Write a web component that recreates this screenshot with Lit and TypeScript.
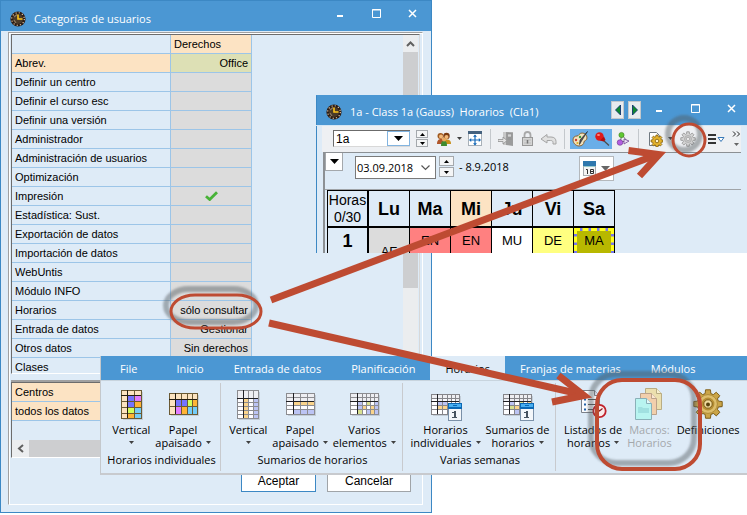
import { LitElement, html, svg, css, nothing } from "lit";
import { customElement, property } from "lit/decorators.js";
import { classMap } from "lit/directives/class-map.js";

const TAN = "#fce3c0", BLUE = "#7474ff", MAG = "#e07cff", ORG = "#ffb436", LIME = "#d2ff5a", SKY = "#74ccf8";
const W = "#fdfdff", HD = "#eeeef2", SO = "#fad48c", SL = "#bcc4f4", SG = "#d8e090";

const gridIcon = (xs: number[], ys: number[], cells: string[][], line: string, dark: string, split: number, extra: unknown = nothing) => {
  const W0 = xs[xs.length - 1], H0 = ys[ys.length - 1];
  return html`<svg width=${W0 + 1} height=${H0 + 1} viewBox="0 0 ${W0 + 1} ${H0 + 1}" overflow="visible" shape-rendering="crispEdges">
    <rect x="2" y="2" width=${W0} height=${H0} fill="#000" opacity=".12"></rect>
    ${cells.map((r, j) => r.map((c, i) => svg`<rect x=${xs[i]} y=${ys[j]} width=${xs[i + 1] - xs[i]} height=${ys[j + 1] - ys[j]} fill=${c}></rect>`))}
    ${xs.map((x) => svg`<rect x=${x} y="0" width="1" height=${H0 + 1} fill=${line}></rect>`)}
    ${ys.map((y) => svg`<rect x="0" y=${y} width=${W0 + 1} height="1" fill=${line}></rect>`)}
    <rect x=${xs[1]} y="0" width="1" height=${H0} fill=${dark}></rect>
    <rect x="0" y=${ys[split]} width=${W0} height="1" fill=${dark}></rect>
    ${extra}
  </svg>`;
};

const dayCard = svg`<g>
  <rect x="17" y="9" width="14" height="18" fill="#7a90a8"></rect>
  <rect x="18" y="15" width="12" height="11" fill="#f4f7fa"></rect>
  <rect x="17" y="9" width="14" height="6" fill="#0b68b4"></rect>
  <rect x="18" y="10" width="12" height="3" fill="#48aef0"></rect>
  <rect x="22" y="11" width="4" height="1" fill="#0b68b4"></rect>
  <path d="M21 18h2v-1h2v6h1v1h-5v-1h2v-4h-2z" fill="#47535f"></path></g>`;

const gearPath = (cx: number, cy: number, r: number, teeth: number, d: number) => {
  let p = "";
  for (let i = 0; i < teeth; i++) {
    const s = (2 * Math.PI) / teeth;
    const a = i * s - Math.PI / 2;
    [[-0.34, r - d], [-0.22, r], [0.22, r], [0.34, r - d]].forEach(([k, q]) => {
      p += `${p ? "L" : "M"}${(cx + Math.cos(a + k * s) * q).toFixed(2)} ${(cy + Math.sin(a + k * s) * q).toFixed(2)}`;
    });
  }
  return p + "Z";
};

const icons: Record<string, unknown> = {
  clock: html`<svg width="16" height="16" viewBox="0 0 16 16"><circle cx="8" cy="8" r="7.6" fill="#2b1c14"></circle>
    <circle cx="8" cy="8" r="6.3" fill="none" stroke="#e8c8a4" stroke-width="1.2" stroke-dasharray="1.1 2.2"></circle>
    <circle cx="8" cy="8" r="5" fill="#4a3a28"></circle><path d="M4 6l3-2.500M4 9l2 3" stroke="#8c7860" stroke-width="1.300"></path><path d="M8 3.500v4.500h4.500" fill="none" stroke="#ffc61a" stroke-width="1.6"></path></svg>`,
  people: html`<svg width="16" height="16" viewBox="0 0 16 16"><circle cx="4.5" cy="5" r="3" fill="#a05a20"></circle><circle cx="10.5" cy="5" r="3.2" fill="#7a3a10"></circle>
    <circle cx="5" cy="5.6" r="2" fill="#f2b878"></circle><circle cx="10.5" cy="6" r="2" fill="#f2b878"></circle>
    <path d="M1 13c0-4 2-5 4-5s3 1 3 5z" fill="#b0562a"></path><path d="M7 13c0-4 2-4.500 4-4.500s4 1 4 4.500z" fill="#c8901c"></path>
    <path d="M5 15c0-4 1-5 3-5s3 1 3 5z" fill="#3e8a2e"></path><circle cx="8" cy="8.500" r="2" fill="#e8a860"></circle></svg>`,
  fit: html`<svg width="14" height="15" viewBox="0 0 14 15"><rect x=".5" y=".5" width="13" height="14" fill="#fff" stroke="#a8b0b8"></rect><rect x="0" y="0" width="14" height="3" fill="#44617e"></rect>
    <path d="M2 9h10M7 4.500v9" stroke="#1669b8" stroke-width="1.2"></path><path d="M7 3.500l2 2.200H5zM7 14.500l2-2.200H5zM1 9l2.200-2v4zM13 9l-2.200-2v4z" fill="#1669b8"></path></svg>`,
  door: html`<svg width="17" height="16" viewBox="0 0 17 16"><path d="M5 1h10v13H5z" fill="#c8c8c8"></path><path d="M8 1l7 .5v13.500l-7-1z" fill="#9c9c9c"></path><path d="M9.500 3h4v3h-4zM9.500 8h4" fill="#d4d4d4" stroke="#8a8a8a" stroke-width=".6"></path>
    <path d="M0 8.500h5V6l4 3.500L5 13v-2.500H0z" fill="#e4e4e4" stroke="#909090" stroke-width=".8"></path></svg>`,
  lock: html`<svg width="13" height="16" viewBox="0 0 13 16"><path d="M3.500 7V4a3 3 0 016 0v3" fill="none" stroke="#a8a8a8" stroke-width="1.800"></path>
    <rect x="1.500" y="6.500" width="10" height="8" fill="#d4d4d4" stroke="#989898"></rect><path d="M3 9h7M3 12h7" stroke="#bbb"></path><path d="M6.500 9v3.500" stroke="#777" stroke-width="1.500"></path></svg>`,
  undo: html`<svg width="17" height="12" viewBox="0 0 17 12"><path d="M1 6l6-4.500V4h4c3.500 0 5 2 5 4.500v2.500h-3V9.500c0-1.500-1-2-2.500-2H7V10z" fill="#e0e0e0" stroke="#a4a4a4"></path></svg>`,
  palette: html`<svg width="17" height="16" viewBox="0 0 17 16"><path d="M1 9c0-3 2-4 4-4s2-3 5-3 5 2 5 5-3 2-3 4-2 4-5 4-6-3-6-6z" fill="#f1e2bd" stroke="#8b6534"></path><circle cx="4" cy="9" r="1.200" fill="#d03a2a"></circle>
    <circle cx="8" cy="6" r="1.200" fill="#3b9a3b"></circle><circle cx="5.500" cy="12" r="1.100" fill="#e0b020"></circle><path d="M15.500 .5L9.500 10l-2 3.500L8 9z" fill="#50535b" stroke="#222" stroke-width=".6"></path></svg>`,
  pin: html`<svg width="16" height="16" viewBox="0 0 16 16"><path d="M9 9l6 5.500" stroke="#4a4a4a" stroke-width="1.200"></path><circle cx="5.500" cy="5.500" r="4.200" fill="#e01818"></circle><path d="M6 9.500l4-4 1.500 3.500-2 1.500z" fill="#b00c0c"></path><ellipse cx="4.500" cy="4" rx="1.500" ry="1" fill="#ff8a80"></ellipse></svg>`,
  balls: html`<svg width="14" height="16" viewBox="0 0 14 16"><path d="M6 4l-2 7 7-1-5-6" fill="none" stroke="#777"></path><circle cx="5.500" cy="4" r="2.600" fill="#5fc832" stroke="#3c7d1e" stroke-width=".6"></circle><circle cx="4" cy="11.500" r="2.800" fill="#b45fe0" stroke="#66308a" stroke-width=".6"></circle><path d="M8 8l5 2-5 3z" fill="#ece0f4" stroke="#66308a" stroke-width=".7"></path></svg>`,
  docgear: html`<svg width="16" height="16" viewBox="0 0 16 16"><path d="M2.500 1.500h7l3 3v10h-10z" fill="#fff" stroke="#707880"></path><path d=${gearPath(10, 10, 6, 8, 1.5)} fill="#e5b32c" stroke="#7d5a0c" stroke-width=".8"></path><circle cx="10" cy="10" r="1.800" fill="#fff3c8" stroke="#7d5a0c" stroke-width=".8"></circle></svg>`,
  greygear: html`<svg width="16" height="16" viewBox="0 0 16 16"><path d=${gearPath(8, 8, 7.3, 8, 2)} fill="#d4d4d4" stroke="#989898" stroke-width=".9"></path><circle cx="8" cy="8" r="3.600" fill="#c4c4c4" stroke="#a4a4a4" stroke-width=".6"></circle><circle cx="8" cy="8" r="1.600" fill="#f0f0f0" stroke="#989898" stroke-width=".6"></circle></svg>`,
  list: html`<svg width="17" height="12" viewBox="0 0 17 12"><path d="M0 2h8M0 6h8M0 10h8" stroke="#333" stroke-width="2"></path><path d="M10 4.500h6l-3 4z" fill="#fff" stroke="#3a7ab8"></path></svg>`,
  calendar: html`<svg width="14" height="16" viewBox="0 0 14 16"><rect x=".5" y="1.500" width="12" height="13" fill="#f4f4f4" stroke="#a8acb0"></rect><rect x="0" y="0" width="13" height="5" fill="#2e77ad"></rect><path d="M1 5.500h11" stroke="#9cc"></path><path d="M3 8.500h1.500v4.500M7.500 8.500h3v4h-3zM7.500 10.500h3" fill="none" stroke="#333"></path></svg>`,
  check: html`<svg width="13" height="10" viewBox="0 0 13 10"><path d="M1 5.200L4.700 8.500 12 1.200" fill="none" stroke="#48b338" stroke-width="2.800"></path></svg>`,
  up: html`<svg width="9" height="6" viewBox="0 0 9 6"><path d="M1 5l3.500-3.500L8 5" fill="none" stroke="#606060" stroke-width="2"></path></svg>`,
  left: html`<svg width="7" height="9" viewBox="0 0 7 9"><path d="M6 1L2 4.500 6 8" fill="none" stroke="#606060" stroke-width="2"></path></svg>`,
  caret: html`<svg width="5" height="3" viewBox="0 0 5 3"><path d="M0 0h5L2.500 3z" fill="#404040"></path></svg>`,
  drop: html`<svg width="9" height="5" viewBox="0 0 9 5"><path d="M0 0h9L4.500 5z" fill="currentColor"></path></svg>`,
  spinUp: html`<svg width="5" height="3" viewBox="0 0 5 3"><path d="M0 3h5L2.500 0z" fill="#000"></path></svg>`,
  spinDown: html`<svg width="5" height="3" viewBox="0 0 5 3"><path d="M0 0h5L2.500 3z" fill="#000"></path></svg>`,
  chevron: html`<svg width="9" height="6" viewBox="0 0 9 6"><path d="M.5 .5l4 4 4-4" fill="none" stroke="#555" stroke-width="1.200"></path></svg>`,
  more: html`<svg width="9" height="16" viewBox="0 0 9 16"><path d="M1 .5L3.500 3 1 5.500M5 .5L7.500 3 5 5.500" fill="none" stroke="#222"></path><path d="M2 12h5l-2.500 3z" fill="#666"></path></svg>`,
  prev: html`<svg width="6" height="10" viewBox="0 0 6 10"><path d="M5.500 0v10L.5 5z" fill="#118a2e" stroke="#04266b" stroke-width=".8"></path></svg>`,
  next: html`<svg width="6" height="10" viewBox="0 0 6 10"><path d="M.5 0v10l5-5z" fill="#118a2e" stroke="#04266b" stroke-width=".8"></path></svg>`,
  min: html`<svg width="9" height="9" viewBox="0 0 9 9"><path d="M1 7h6" stroke="#fff" stroke-width="2"></path></svg>`,
  max: html`<svg width="9" height="9" viewBox="0 0 9 9"><path d="M.5 .5h8v8h-8zM0 1h9" fill="none" stroke="#fff"></path></svg>`,
  close: html`<svg width="9" height="9" viewBox="0 0 9 9"><path d="M1 1l7 7M8 1L1 8" stroke="#fff" stroke-width="1.500"></path></svg>`,
  indV: gridIcon([0, 6, 13, 20], [0, 5, 11, 17, 23, 28], [[TAN, TAN, TAN], [TAN, BLUE, MAG], [TAN, BLUE, ORG], [TAN, LIME, SKY], [TAN, ORG, SKY]], "#6b5a34", "#231c10", 1),
  indH: gridIcon([0, 6, 12, 18, 23, 28], [0, 6, 13, 21], [[TAN, TAN, TAN, TAN, TAN], [TAN, BLUE, BLUE, LIME, ORG], [TAN, MAG, ORG, SKY, SKY]], "#6b5a34", "#231c10", 1),
  sumV: gridIcon([0, 6, 11, 16, 21], [0, 8, 12, 16, 20, 24, 28], [[HD, HD, HD, HD], ...Array(5).fill([W, SO, W, SL])], "#8c8c90", "#202024", 1),
  sumH: gridIcon([0, 7, 14, 21, 28], [0, 4, 8, 12, 16, 21], [[HD, HD, HD, HD], [HD, HD, HD, HD], [W, SO, SO, SO], [W, W, W, W], [W, SL, SL, SL]], "#8c8c90", "#202024", 2),
  sumX: gridIcon([0, 7, 12, 16, 20, 24, 28], [0, 4, 8, 12, 16, 21], [[HD, HD, HD, HD, HD, HD], [HD, HD, HD, HD, HD, HD], [W, SL, W, SG, W, SL], [W, SL, SO, W, SO, SL], [W, SG, W, SL, SO, SL]], "#8c8c90", "#202024", 2),
  weekInd: gridIcon([0, 6, 11, 16, 20, 24, 28], [0, 4, 7, 11, 15, 20], [[HD, HD, HD, HD, HD, HD], [W, HD, W, HD, W, HD], [W, SL, SL, W, W, W], [W, SO, SO, SO, W, W], [W, W, W, W, W, W]], "#85858a", "#202024", 2, dayCard),
  weekSum: gridIcon([0, 6, 11, 16, 20, 24, 28], [0, 4, 7, 11, 15, 20], [[HD, HD, HD, HD, HD, HD], [HD, HD, HD, HD, HD, HD], [W, SL, W, SG, W, SO], [W, SG, SO, W, SO, SL], [W, W, SL, SG, W, W]], "#85858a", "#202024", 2, dayCard),
  report: html`<svg width="28" height="30" viewBox="0 0 28 30"><path d="M2.500 1.500h13l5 5v17h-18z" fill="#fbfcfe" stroke="#7c8088"></path><path d="M15.500 1.500v5h5" fill="#dde" stroke="#7c8088"></path>
    <path d="M9 10.500h8M9 15.500h8M9 20.500h5" stroke="#555"></path><path d="M5 10.500h2M5 15.500h2M5 20.500h2" stroke="#2362a8" stroke-width="2"></path>
    <circle cx="20.500" cy="22" r="6.200" fill="#f8eaea" stroke="#c0202a" stroke-width="1.800"></circle><path d="M17.500 19l3 3 3-2.500" fill="none" stroke="#8a1820" stroke-width="1.200"></path></svg>`,
  macros: html`<svg width="28" height="32" viewBox="0 0 28 32"><path d="M10.500 .5h11l5 5v16h-16z" fill="#ecdfae" stroke="#b9ad84"></path><path d="M21.500 .5v5h5" fill="#f8f0d0" stroke="#b9ad84"></path>
    <path d="M5.500 5.500h11l5 5v16h-16z" fill="#f2cfac" stroke="#bca28a"></path><path d="M16.500 5.500v5h5" fill="#fae6d0" stroke="#bca28a"></path>
    <path d="M.5 10.500h11l5 5v16H.5z" fill="#b8f4f0" stroke="#8ab0b8"></path><path d="M11.500 10.500v5h5" fill="#e2fafa" stroke="#8ab0b8"></path><path d="M3 19h4l1 1h6v5H3z" fill="#a0e0e0"></path></svg>`,
  biggear: html`<svg width="30" height="30" viewBox="0 0 30 30"><path d=${gearPath(15.5, 16, 14, 8, 3.6)} fill="#000" opacity=".2"></path><path d=${gearPath(15, 15, 14.4, 8, 3.6)} fill="#caa548" stroke="#80601a" stroke-width="1"></path><circle cx="15" cy="15" r="9.400" fill="#ddbe6c" stroke="#a5812e" stroke-width=".8"></circle>
    <circle cx="15" cy="15" r="6.400" fill="#b58e34"></circle><circle cx="15" cy="15" r="4.200" fill="#f0dca0" stroke="#7c5c18"></circle><circle cx="15" cy="15.500" r="2" fill="#58430f"></circle></svg>`,
};

const shared = css`
  :host { display: block; font: 11px/14px "Liberation Sans", Arial, sans-serif; color: #000; }
  * { box-sizing: border-box; }
  button, input { font: inherit; color: inherit; margin: 0; padding: 0; border: 0; background: none; border-radius: 0; }
  button { display: flex; align-items: center; justify-content: center; }
  svg { display: block; flex: none; }
  table { border-collapse: separate; border-spacing: 0; table-layout: fixed; }
  th, td { padding: 0; }
`;

@customElement("title-bar")
class TitleBar extends LitElement {
  @property() label = "";
  @property({ type: Boolean }) pager = false;
  static styles = [shared, css`
    .bar { display: flex; align-items: center; height: 30px; padding: 5px 14px 0 9px; background: #4b97d3; color: #fff; }
    .compact { height: 29px; padding-top: 3px; padding-right: 11px; }
    .label { flex: 1; margin: 0 0 0 8px; font: 400 11px/16px "Open Sans", "Noto Sans", sans-serif; white-space: pre; }
    .tools { display: flex; gap: 27px; padding-bottom: 10px; }
    .pager { display: flex; gap: 4px; padding-bottom: 4px; margin-right: 34px; }
    .page { width: 13px; height: 18px; background: #e9ebee; border: 1px solid #c4c8cc; }
    .pager + .tools { padding-bottom: 7px; margin-left: -20px; }
  `];
  render() {
    return html`<header class=${classMap({ bar: true, compact: this.pager })}>${icons.clock}<h1 class="label">${this.label}</h1>
      ${this.pager ? html`<div class="pager"><button class="page" aria-label="Anterior">${icons.prev}</button><button class="page" aria-label="Siguiente">${icons.next}</button></div>` : nothing}
      <div class="tools"><button aria-label="Minimizar">${icons.min}</button><button aria-label="Maximizar">${icons.max}</button><button aria-label="Cerrar">${icons.close}</button></div></header>`;
  }
}

const rights: [string, string][] = [
  ["Abrev.", "Office"], ["Definir un centro", ""], ["Definir el curso esc", ""], ["Definir una versión", ""], ["Administrador", ""],
  ["Administración de usuarios", ""], ["Optimización", ""], ["Impresión", "check"], ["Estadística: Sust.", ""], ["Exportación de datos", ""],
  ["Importación de datos", ""], ["WebUntis", ""], ["Módulo INFO", ""], ["Horarios", "sólo consultar"], ["Entrada de datos", "Gestionar"],
  ["Otros datos", "Sin derechos"], ["Clases", ""],
];

@customElement("user-categories")
class UserCategories extends LitElement {
  static styles = [shared, css`
    .win { background: #deebf7; border: 1px solid #3c88c4; padding-bottom: 7px; }
    .frame { margin: 1px 8px 0 7px; border: 1px solid #a0a0a0; border-right-color: #fff; border-bottom-color: #fff; padding: 1px 2px 12px; box-shadow: inset 1px 1px #fff; }
    .panel { display: flex; border: 1px solid #6c6c6c; border-right-color: #d8d8d8; border-bottom-color: #fff; overflow: hidden; }
    .rights { height: 340px; }
    .centres { margin-top: 8px; height: 76px; flex-direction: column; justify-content: space-between; box-shadow: 0 -2px #a0a0a0; }
    .space { flex: 1; }
    td, th { height: 19px; padding: 0 3px; text-align: left; font-weight: 400; border-right: 1px solid #9cc5e8; border-bottom: 1px solid #9cc5e8; white-space: nowrap; line-height: 18px; }
    .name { width: 159px; }
    .value { width: 81px; }
    td { background: #dcdcdc; text-align: right; }
    .tan { background: #fce3c3; }
    td.green { background: #dde0b5; }
    td svg { margin: 0 auto; }
    .vbar { width: 15px; background: #ebedef; margin-right: 1px; }
    .vbar button { width: 15px; height: 17px; }
    .thumb { height: 236px; background: #cdced0; }
    .hbar { display: flex; height: 17px; background: #cdced0; }
    .hbar button { width: 17px; background: #ebedef; }
    .site { width: 87px; }
    .actions { display: flex; justify-content: flex-end; gap: 11px; margin: 9px 9px 0 0; font-size: 12px; }
    .actions button { height: 25px; width: 84px; background: #fff; border: 1px solid #a0a4a8; padding-top: 3px; }
    .actions .ok { width: 75px; border-color: #3c88c4; }
  `];
  render() {
    return html`<section class="win"><title-bar label="Categorías de usuarios"></title-bar>
      <div class="frame">
        <div class="panel rights">
          <div class="space"><table><colgroup><col class="name"><col class="value"></colgroup>
            <tr><th></th><th class="tan">Derechos</th></tr>
            ${rights.map(([n, v], i) => html`<tr><th class=${classMap({ tan: i === 0 })}>${n}</th><td class=${classMap({ green: i === 0 })}>${v === "check" ? icons.check : v}</td></tr>`)}
          </table></div>
          <div class="vbar"><button aria-label="Subir">${icons.up}</button><div class="thumb"></div></div>
        </div>
        <div class="panel centres">
          <table><colgroup><col class="site"></colgroup><tr><th class="tan">Centros</th></tr><tr><th class="tan">todos los datos</th></tr></table>
          <div class="hbar"><button aria-label="Izquierda">${icons.left}</button></div>
        </div>
        <div class="actions"><button class="ok">Aceptar</button><button class="no">Cancelar</button></div>
      </div></section>`;
  }
}

@customElement("timetable-window")
class TimetableWindow extends LitElement {
  static styles = [shared, css`
    .win { background: #deebf7; border: 1px solid #4b97d3; border-bottom: 0; border-left-color: #3c88c4; border-right: 0; }
    .body { padding: 0 6px; border-top: 1px solid #d5e6f5; margin-left: -1px; }
    .toolbar { display: flex; align-items: center; height: 26px; padding: 0 0 1px 11px; background: #eef0f3; white-space: nowrap; overflow: hidden; }
    .toolbar > * { flex: none; }
    .combo { display: flex; width: 77px; height: 17px; background: #fff; border: 1px solid #6b6b6b; border-right: 0; border-bottom-color: #d8d8d8; }
    .combo input { width: 53px; padding-left: 2px; font-size: 12px; }
    .combo button { width: 23px; border: 1px solid #82b4e0; }
    .spin { display: flex; flex-direction: column; justify-content: space-between; width: 12px; height: 17px; margin: 0 5px 0 6px; }
    .spin button { height: 8px; background: #f4f5f6; border: 1px solid #a4a8ac; }
    .tool { width: 21px; height: 20px; }
    .on { background: #6aaee8; }
    .drop { width: 10px; }
    .near { margin-left: 2px; }
    .far { margin-left: 8px; }
    .more { width: 12px; margin-left: 3px; }
    i { width: 1px; height: 20px; margin: 0 5px; background: #c4c8cc; }
    .panel { margin-left: 1px; border-top: 1px solid #8c9094; border-left: 2px solid #8c9094; }
    .dates { display: flex; align-items: flex-start; height: 37px; border-bottom: 1px solid #a0a4a8; white-space: nowrap; }
    .menu { width: 18px; height: 18px; background: #fff; border: 1px solid #a4a8ac; border-top: 0; }
    .date { display: flex; align-items: center; width: 81px; height: 23px; margin: 3px 3px 0 12px; background: #fff; border: 1px solid #7a7a7a; }
    .date input { width: 61px; padding-left: 1px; font: 11px/14px "Open Sans", "Noto Sans", sans-serif; }
    .date button { width: 17px; height: 20px; }
    .wide { width: 15px; height: 21px; margin: 3px 5px 0 0; }
    .wide button { height: 10px; }
    .until { font: 11px/14px "Open Sans", "Noto Sans", sans-serif; margin-top: 7px; }
    .pick { width: 35px; height: 25px; gap: 4px; margin-left: auto; margin-right: 127px; margin-top: 3px; background: #fff; border: 1px solid #b4b8bc; color: #666; }
    table { margin: 0 0 0 2px; border-left: 1px solid #000; border-top: 1px solid #000; text-align: center; }
    td, th { width: 41px; border-right: 1px solid #000; }
    th { height: 37px; border-bottom: 2px solid #000; font-weight: 700; font-size: 18px; }
    .hours { font-weight: 400; font-size: 14px; line-height: 17px; border-right-width: 2px; }
    td.num { font-weight: 700; font-size: 18px; border-right-width: 2px; }
    td { height: 40px; vertical-align: top; padding-top: 6px; font-size: 13px; }
    .mid { background: #fce3c3; }
    td.grey { background: #dcdcdc; padding-top: 17px; }
    .red { background: #ff8080; }
    .white { background: #fff; }
    .yellow { background: #ffff80; }
    td.olive { padding: 0; }
    .mark { border: 3px dashed #ffff20; background: linear-gradient(#b8b800, #b8b800) padding-box, #7878f0; height: 40px; padding-top: 3px; }
  `];
  tool(n: string, label: string, cls = "") { return html`<button class="tool ${cls}" aria-label=${label}>${icons[n]}</button>`; }
  render() {
    return html`<section class="win"><title-bar pager label="1a - Class 1a (Gauss)  Horarios  (Cla1)"></title-bar>
      <div class="body">
        <div class="toolbar">
          <div class="combo"><input aria-label="Clase" value="1a"><button aria-label="Elegir clase">${icons.drop}</button></div>
          <div class="spin"><button aria-label="Más">${icons.spinUp}</button><button aria-label="Menos">${icons.spinDown}</button></div>
          ${this.tool("people", "Clases")}${this.tool("caret", "Opciones", "drop")}${this.tool("fit", "Ajustar")}<i></i>
          ${this.tool("door", "Salir")}${this.tool("lock", "Bloquear")}${this.tool("undo", "Deshacer")}<i></i>
          ${this.tool("palette", "Colores", "on")}${this.tool("pin", "Fijar", "on")}${this.tool("balls", "Enlaces")}<i></i>
          ${this.tool("docgear", "Formato")}${this.tool("caret", "Opciones", "drop")}${this.tool("greygear", "Macros", "near")}
          ${this.tool("list", "Lista", "far")}${this.tool("more", "Ver más", "more")}
        </div>
        <div class="panel">
          <div class="dates">
            <button class="menu" aria-label="Menú">${icons.drop}</button>
            <div class="date"><input aria-label="Desde" value="03.09.2018"><button aria-label="Abrir calendario">${icons.chevron}</button></div>
            <div class="spin wide"><button aria-label="Semana siguiente">${icons.spinUp}</button><button aria-label="Semana anterior">${icons.spinDown}</button></div>
            <span class="until">- 8.9.2018</span>
            <button class="pick" aria-label="Calendario">${icons.calendar}${icons.drop}</button>
          </div>
          <table>
            <tr><th class="hours">Horas<br>0/30</th>${["Lu", "Ma", "Mi", "Ju", "Vi", "Sa"].map((d) => html`<th class=${classMap({ mid: d === "Mi" })}>${d}</th>`)}</tr>
            <tr><td class="num">1</td><td class="grey">AF</td><td class="red">EN</td><td class="red">EN</td><td class="white">MU</td><td class="yellow">DE</td><td class="olive"><div class="mark">MA</div></td></tr>
          </table>
        </div>
      </div></section>`;
  }
}

interface Item { icon: string; lines: [string, string?]; menu?: boolean; off?: boolean }
const groups: { name: string; items: Item[] }[] = [
  { name: "Horarios individuales", items: [{ icon: "indV", lines: ["Vertical"], menu: true }, { icon: "indH", lines: ["Papel", "apaisado"], menu: true }] },
  { name: "Sumarios de horarios", items: [{ icon: "sumV", lines: ["Vertical"], menu: true }, { icon: "sumH", lines: ["Papel", "apaisado"], menu: true }, { icon: "sumX", lines: ["Varios", "elementos"], menu: true }] },
  { name: "Varias semanas", items: [{ icon: "weekInd", lines: ["Horarios", "individuales"], menu: true }, { icon: "weekSum", lines: ["Sumarios de", "horarios"], menu: true }] },
  { name: "", items: [{ icon: "report", lines: ["Listados de", "horarios"], menu: true }, { icon: "macros", lines: ["Macros:", "Horarios"], off: true }, { icon: "biggear", lines: ["Definiciones"] }] },
];
const tabs = ["File", "Inicio", "Entrada de datos", "Planificación", "Horarios", "Franjas de materias", "Módulos"];

@customElement("ribbon-bar")
class RibbonBar extends LitElement {
  static styles = [shared, css`
    .ribbon { font: 11px/13px "Open Sans", "Noto Sans", sans-serif; background: #deebf7; border-left: 1px solid #c4c8cc; border-bottom: 2px solid #c8cace; }
    .tabs { display: flex; height: 24px; background: #4b97d3; }
    .tab { padding: 0 15px; color: #fff; white-space: nowrap; }
    .first { padding: 0 24px 0 19px; }
    .active { background: #deebf7; color: #000; }
    .groups { display: grid; grid-template-columns: 120px 182px 153px 1fr; border-top: 1px solid #c8d4de; padding: 2px 0; }
    .group { display: flex; flex-direction: column; align-items: center; height: 88px; padding: 5px 0 0 2px; border-right: 1px solid #c8cace; }
    .group:last-child { align-items: flex-start; padding-left: 8px; border: 0; }
    .items { display: flex; gap: 5px; height: 65px; }
    .item { flex-direction: column; justify-content: flex-start; white-space: nowrap; }
    .pic { display: flex; align-items: center; justify-content: center; height: 32px; margin-bottom: 3px; }
    .line { display: flex; align-items: center; gap: 4px; height: 13px; }
    .off { color: #a4a8ac; }
    .name { margin: 0; font: inherit; }
  `];
  render() {
    return html`<section class="ribbon">
      <nav class="tabs">${tabs.map((t, i) => html`<button class=${classMap({ tab: true, first: i === 0, active: t === "Horarios" })}>${t}</button>`)}</nav>
      <div class="groups">${groups.map((g) => html`<div class="group"><div class="items">
        ${g.items.map((it) => html`<button class=${classMap({ item: true, off: !!it.off })} ?disabled=${!!it.off}>
          <span class="pic">${icons[it.icon]}</span><span class="line">${it.lines[0]}</span>
          <span class="line">${it.lines[1] ?? nothing}${it.menu ? icons.caret : nothing}</span></button>`)}
      </div>${g.name ? html`<h2 class="name">${g.name}</h2>` : nothing}</div>`)}</div></section>`;
  }
}

@customElement("app-root")
class AppRoot extends LitElement {
  static styles = css`
    :host { display: block; position: relative; min-height: 100vh; background: #fff; overflow: hidden; }
    user-categories { width: calc(100% - 315px); }
    timetable-window { position: absolute; top: 95px; left: 316px; right: 0; height: 158px; overflow: hidden; }
    ribbon-bar { position: absolute; top: 356px; left: 100px; right: 0; }
    .marks { position: absolute; top: 0; left: 0; pointer-events: none; }
  `;
  render() {
    return html`<user-categories></user-categories><timetable-window></timetable-window><ribbon-bar></ribbon-bar>
      <svg class="marks" width="747" height="515" viewBox="0 0 747 515" fill="none">
        <defs><filter id="soft" x="-20%" y="-20%" width="140%" height="140%"><feGaussianBlur stdDeviation="1"></feGaussianBlur></filter></defs>
        <g stroke="#555b60" stroke-opacity=".45" stroke-width="6" filter="url(#soft)">
          <rect x="166" y="289" width="90" height="33" rx="23" ry="17"></rect><circle cx="684" cy="134" r="16"></circle><rect x="591" y="374" width="103" height="89" rx="25"></rect>
        </g>
        <g stroke="#be4b32">
          <rect x="171" y="295" width="90" height="33" rx="24" ry="17" stroke-width="3"></rect><circle cx="689" cy="140" r="16" stroke-width="3"></circle><rect x="597" y="380" width="103" height="89" rx="25" stroke-width="4"></rect>
          <g stroke-width="7"><path d="M271 300L656 155"></path><path d="M628.500 150.500L659 154.500L639.500 176"></path><path d="M269 323L582 394.500"></path><path d="M558.500 375.500L584 395.500L552 402"></path></g>
        </g>
      </svg>`;
  }
}
